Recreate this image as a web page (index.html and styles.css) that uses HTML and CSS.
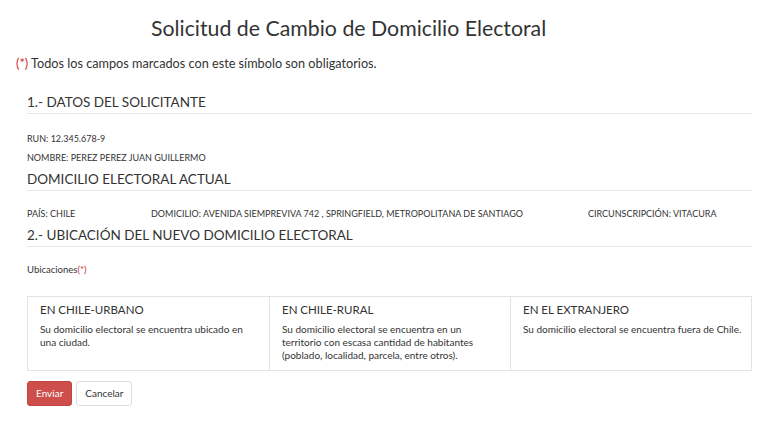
FILE: index.html
```html
<!DOCTYPE html>
<html lang="es">
<head>
    <meta charset="UTF-8">
    <title>Solicitud de Cambio de Domicilio Electoral</title>
    <link rel="stylesheet" href="styles.css">
</head>
<body>
    <div class="page">
        <h1 class="title">Solicitud de Cambio de Domicilio Electoral</h1>
        <p class="note"><span class="req">(*)</span> Todos los campos marcados con este símbolo son obligatorios.</p>

        <div class="section">
            <h2 class="section-title">1.- DATOS DEL SOLICITANTE</h2>
            <div class="field">RUN: 12.345.678-9</div>
            <div class="field">NOMBRE: PEREZ PEREZ JUAN GUILLERMO</div>

            <h2 class="section-title">DOMICILIO ELECTORAL ACTUAL</h2>
            <div class="field-row">
                <div class="field pais">PAÍS: CHILE</div>
                <div class="field domicilio">DOMICILIO: AVENIDA SIEMPREVIVA 742 , SPRINGFIELD, METROPOLITANA DE SANTIAGO</div>
                <div class="field">CIRCUNSCRIPCIÓN: VITACURA</div>
            </div>

            <h2 class="section-title">2.- UBICACIÓN DEL NUEVO DOMICILIO ELECTORAL</h2>
            <div class="label">Ubicaciones<span class="req">(*)</span></div>

            <div class="options">
                <div class="option">
                    <div class="option-title">EN CHILE-URBANO</div>
                    <div class="option-desc">Su domicilio electoral se encuentra ubicado en una ciudad.</div>
                </div>
                <div class="option">
                    <div class="option-title">EN CHILE-RURAL</div>
                    <div class="option-desc">Su domicilio electoral se encuentra en un territorio con escasa cantidad de habitantes (poblado, localidad, parcela, entre otros).</div>
                </div>
                <div class="option">
                    <div class="option-title">EN EL EXTRANJERO</div>
                    <div class="option-desc">Su domicilio electoral se encuentra fuera de Chile.</div>
                </div>
            </div>

            <div class="actions">
                <button class="btn btn-primary">Enviar</button>
                <button class="btn btn-default">Cancelar</button>
            </div>
        </div>
    </div>
</body>
</html>
```

FILE: styles.css
```css
* {
    margin: 0;
    padding: 0;
    box-sizing: border-box;
}

body {
    background: #fff;
    color: #333;
    font-family: Lato, "Open Sans", sans-serif;
}

.page {
    padding: 13px 16px 20px 16px;
}

.title {
    font-size: 21.3px;
    font-weight: normal;
    margin-left: 135px;
    line-height: 30px;
}

.note {
    font-size: 12.7px;
    margin-top: 11px;
    line-height: 18px;
}

.req {
    color: #c9302c;
}

.section {
    padding: 0 0 0 11px;
}

.section-title {
    font-size: 13.5px;
    font-weight: normal;
    line-height: 18px;
    padding-bottom: 2px;
    border-bottom: 1px solid #e8e8e8;
    margin-top: 3px;
    margin-bottom: 13px;
}

.section-title:first-child {
    margin-top: 21px;
    margin-bottom: 14.5px;
}

.field {
    font-size: 9px;
    line-height: 19px;
}

.field-row {
    display: flex;
}

.pais {
    width: 124px;
}

.domicilio {
    width: 437px;
}

.label {
    font-size: 9.5px;
    line-height: 19px;
}

.options {
    display: grid;
    grid-template-columns: 1fr 1fr 1fr;
    border: 1px solid #e3e3e3;
    margin-top: 17px;
}

.option {
    padding: 5px 8px 0 12px;
    height: 73px;
    border-left: 1px solid #e3e3e3;
}

.option:first-child {
    border-left: none;
}

.option-title {
    font-size: 11.5px;
    line-height: 16px;
}

.option-desc {
    font-size: 10px;
    line-height: 13px;
    margin-top: 5px;
}

.actions {
    display: flex;
    gap: 4px;
    margin-top: 10px;
}

.btn {
    font-family: Lato, sans-serif;
    font-size: 10px;
    height: 25px;
    border-radius: 3px;
    padding: 0 8px;
    cursor: pointer;
}

.btn-primary {
    background: #cd4e4b;
    border: 1px solid #c14542;
    color: #fff;
}

.btn-default {
    background: #fff;
    border: 1px solid #ddd;
    color: #333;
}
```
